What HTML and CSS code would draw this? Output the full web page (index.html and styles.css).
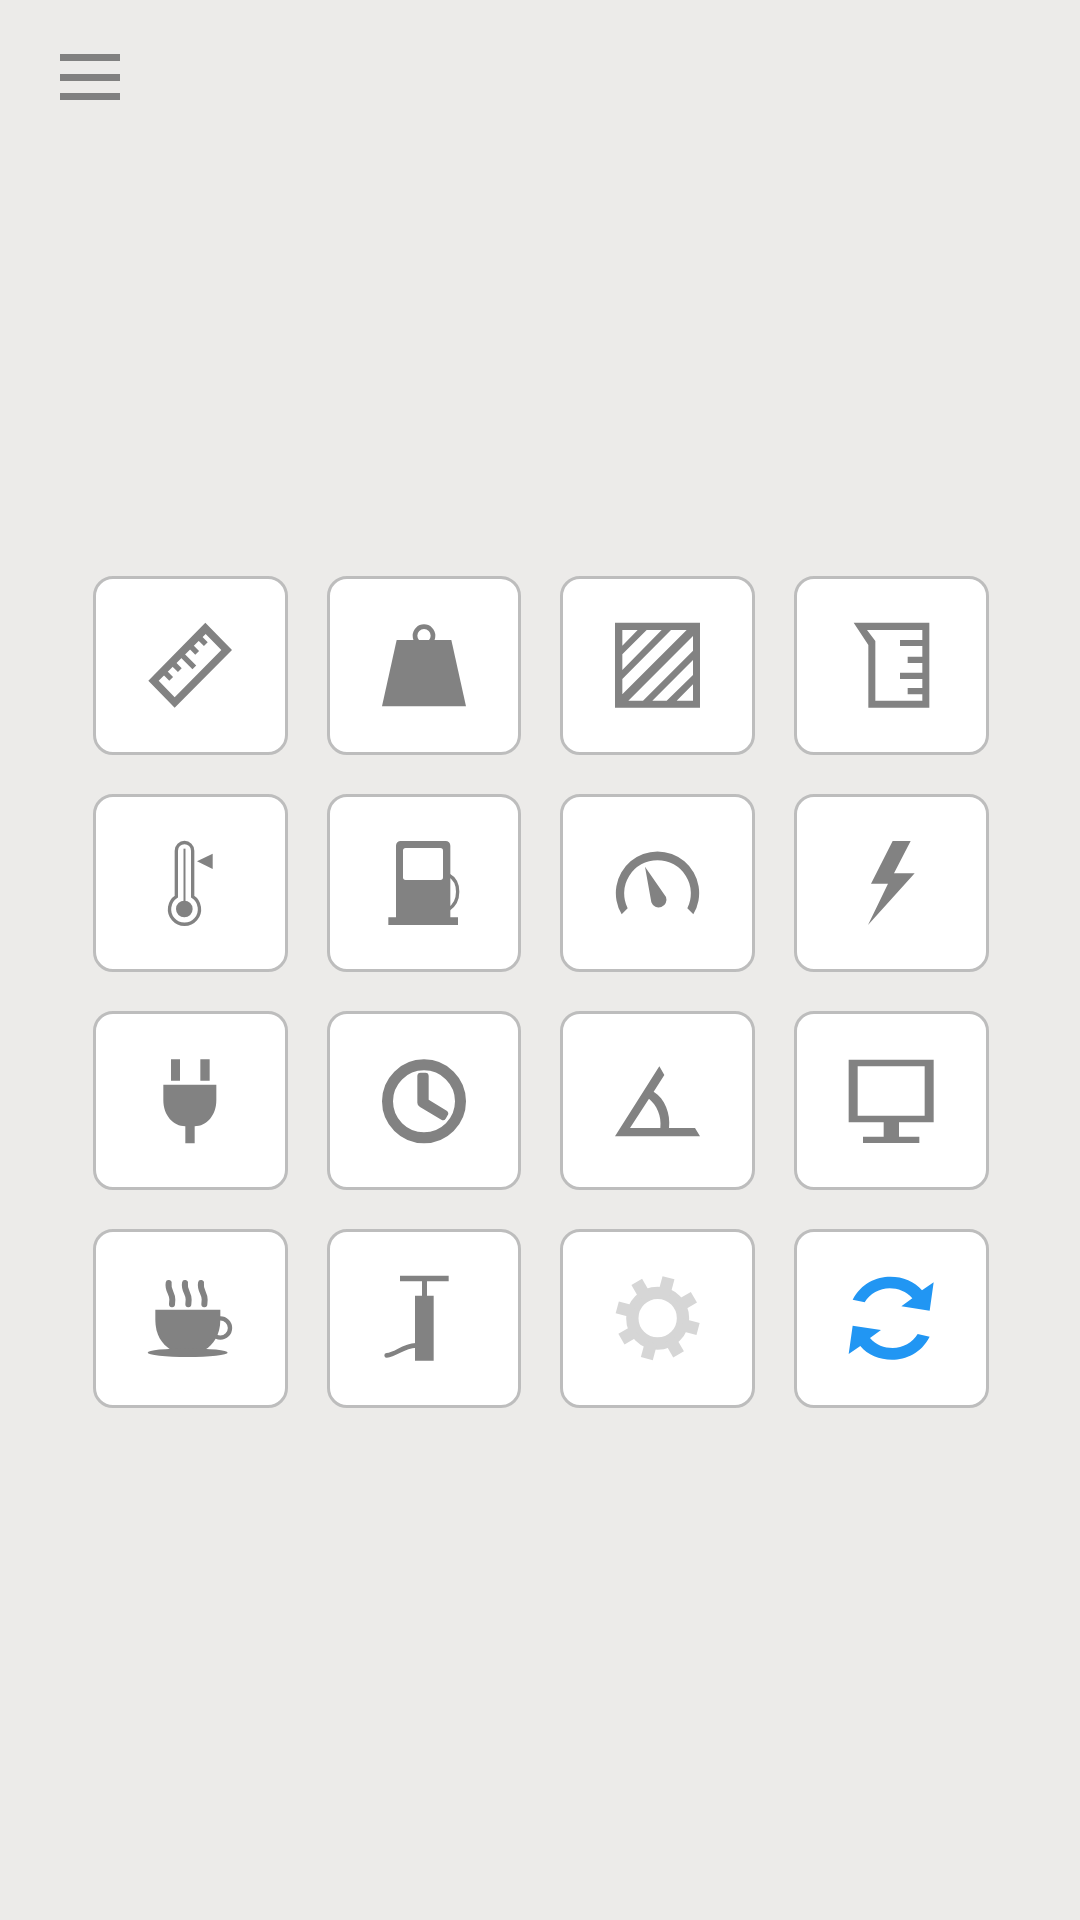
FILE: index.html
```html
<!DOCTYPE html>
<html lang="en">
<head>
<meta charset="utf-8">
<title>Tools</title>
<link rel="stylesheet" href="styles.css">
</head>
<body>
<header class="topbar">
  <button class="menu" aria-label="Menu"><span class="bar"></span><span class="bar"></span><span class="bar"></span></button>
</header>
<main class="grid">
  <button class="tile" aria-label="Length"><svg class="icon" viewBox="195 180 270 270">
    <path fill-rule="evenodd" d="M376,188 L456,270 L284,443 L205,362 Z M377,222 L236,362 L284,412 L424,270 Z"/>
    <path class="line" stroke-width="16" d="M357.500,232.500 L377.500,252.500 M331.500,258.500 L351.500,278.500 M305.500,284.500 L343,322 M279.500,310.500 L299.500,330.500 M253.500,336.500 L273.500,356.500"/>
  </svg></button>
  <button class="tile" aria-label="Weight"><svg class="icon" viewBox="897 180 270 270">
    <circle class="line" stroke-width="14" cx="1032" cy="227" r="27"/>
    <path d="M950,240 H1114 L1158,439 H906 Z"/>
  </svg></button>
  <button class="tile" aria-label="Area"><svg class="icon" viewBox="219 180 270 270">
    <path fill-rule="evenodd" d="M225,188 H480 V443 H225 Z M247,210 V257 L293,210 Z M320,210 L247,283 V330 L365,210 Z M393,210 L247,357 V403 L440,210 Z M459,228 L265,422 H309 L459,272 Z M459,300 L337,422 H380 L459,345 Z M459,373 L410,422 H459 Z"/>
  </svg></button>
  <button class="tile" aria-label="Volume"><svg class="icon" viewBox="919 180 270 270">
    <path fill-rule="evenodd" d="M942,188 H1169 V443 H986 V255 Z M982,210 L1007,243 V422 H1148 V403 H1104 V384 H1148 V357 H1081 V338 H1148 V309 H1104 V290 H1148 V258 H1081 V240 H1148 V210 Z"/>
  </svg></button>

  <button class="tile" aria-label="Temperature"><svg class="icon" viewBox="195 144 270 270">
    <path class="line" stroke-width="10" d="M289,320 V182 A24.500,24.500 0 0 1 338,182 V320 A45,45 0 1 1 289,320 Z"/>
    <path class="line" stroke-width="6" d="M313.500,176 V350"/>
    <circle cx="313" cy="357" r="25"/>
    <path d="M398,191 V237 L351,214 Z"/>
  </svg></button>
  <button class="tile" aria-label="Fuel"><svg class="icon" viewBox="897 144 270 270">
    <path class="line" stroke-width="10" d="M1106,255 Q1133,270 1133,305 Q1133,340 1106,358"/>
    <path fill-rule="evenodd" d="M962,153 H1097 A14,14 0 0 1 1111,167 V382 H1134 V405 H925 V382 H948 V167 A14,14 0 0 1 962,153 Z M977,174 A8,8 0 0 0 969,182 V262 A8,8 0 0 0 977,270 H1081 A8,8 0 0 0 1089,262 V182 A8,8 0 0 0 1081,174 Z"/>
  </svg></button>
  <button class="tile" aria-label="Speed"><svg class="icon" viewBox="219 144 270 270">
    <path d="M245,373 A125,125 0 1 1 460,373 L442,355 A100,100 0 1 0 263,355 Z"/>
    <path d="M315,230 L378,321 A23,23 0 1 1 334,337 Z"/>
  </svg></button>
  <button class="tile" aria-label="Power"><svg class="icon" viewBox="919 144 270 270">
    <path d="M1059,153 H1113 L1063,250 H1125 L985,405 L1045,281 H994 Z"/>
  </svg></button>

  <button class="tile" aria-label="Electricity"><svg class="icon" viewBox="195 167 270 270">
    <path d="M273,177 H300 V241 H273 Z M361,177 H389 V241 H361 Z"/>
    <path d="M250,253 H409 V300 C409,345 380,378 344,378 V429 H316 V378 C280,378 250,345 250,300 Z"/>
  </svg></button>
  <button class="tile" aria-label="Time"><svg class="icon" viewBox="897 167 270 270">
    <circle class="line" stroke-width="33" cx="1032" cy="303" r="109.500"/>
    <path d="M1012,227 Q1012,217 1022,217 H1036 Q1046,217 1046,227 V298 L1100,331 Q1108,337 1103,345 L1097,355 Q1092,363 1084,358 L1020,320 Q1012,316 1012,307 Z"/>
  </svg></button>
  <button class="tile" aria-label="Angle"><svg class="icon" viewBox="219 167 270 270">
    <path fill-rule="evenodd" d="M225,408 L358,198 L373,224 L341,274 C375,295 392,340 387,383 H465 L480,408 Z M270,383 H361 C365,345 350,315 327,295 Z"/>
  </svg></button>
  <button class="tile" aria-label="Screen"><svg class="icon" viewBox="919 167 270 270">
    <path fill-rule="evenodd" d="M927,178 H1182 V366 H1078 V409 H1139 V428 H970 V409 H1032 V366 H927 Z M954,198 V346 H1155 V198 Z"/>
  </svg></button>

  <button class="tile" aria-label="Energy"><svg class="icon" viewBox="195 160 270 270">
    <circle class="line" stroke-width="13" cx="421" cy="325" r="29"/>
    <path d="M226,270 H421 V300 C421,345 400,375 375,390 H272 C245,372 226,345 226,300 Z"/>
    <ellipse cx="323" cy="399" rx="120" ry="13"/>
    <path class="line round" stroke-width="18" d="M266,190 C262,212 278,222 277,240 L276,254 M315,190 C311,212 327,222 326,240 L325,254 M363,190 C359,212 375,222 374,240 L373,254"/>
  </svg></button>
  <button class="tile" aria-label="Pressure"><svg class="icon" viewBox="897 160 270 270">
    <path d="M960,168 H1106 V185 H1041 V228 H1061 V423 H1005 V228 H1026 V185 H960 Z"/>
    <path class="line round" stroke-width="14" d="M920,407 C950,405 965,380 1008,377"/>
  </svg></button>
  <button class="tile" aria-label="Settings"><svg class="icon gear" viewBox="219 160 270 270">
    <circle class="line" stroke-width="37" cx="353" cy="295.500" r="76"/>
    <g class="teeth">
      <rect x="334.500" y="170" width="37" height="50" transform="rotate(15 353 295.500)"/>
      <rect x="334.500" y="170" width="37" height="50" transform="rotate(60 353 295.500)"/>
      <rect x="334.500" y="170" width="37" height="50" transform="rotate(105 353 295.500)"/>
      <rect x="334.500" y="170" width="37" height="50" transform="rotate(150 353 295.500)"/>
      <rect x="334.500" y="170" width="37" height="50" transform="rotate(195 353 295.500)"/>
      <rect x="334.500" y="170" width="37" height="50" transform="rotate(240 353 295.500)"/>
      <rect x="334.500" y="170" width="37" height="50" transform="rotate(285 353 295.500)"/>
      <rect x="334.500" y="170" width="37" height="50" transform="rotate(330 353 295.500)"/>
    </g>
  </svg></button>
  <button class="tile" aria-label="Sync"><svg class="icon sync" viewBox="919 160 270 270">
    <path d="M939,240 C965,190 1010,171 1052,171 C1090,171 1125,185 1147,212 L1182,188 L1170,273 L1085,260 L1118,236 C1100,215 1075,206 1050,206 C1020,206 990,222 975,248 Z"/>
    <path transform="rotate(180 1054.500 295.500)" d="M939,240 C965,190 1010,171 1052,171 C1090,171 1125,185 1147,212 L1182,188 L1170,273 L1085,260 L1118,236 C1100,215 1075,206 1050,206 C1020,206 990,222 975,248 Z"/>
  </svg></button>
</main>
</body>
</html>
```

FILE: styles.css
```css
* { box-sizing: border-box; }

html, body {
  margin: 0;
  padding: 0;
}

body {
  width: 1080px;
  height: 1920px;
  overflow: hidden;
  background: #ecebe9;
  font-family: "Liberation Sans", Arial, sans-serif;
}

.topbar {
  padding: 54px 0 0 60px;
  height: 576px;
}

.menu {
  display: flex;
  flex-direction: column;
  gap: 12.5px;
  width: 60px;
  padding: 0;
  border: 0;
  background: none;
}

.bar {
  display: block;
  width: 60px;
  height: 7px;
  background: #808080;
}

.grid {
  display: grid;
  grid-template-columns: repeat(4, 194.7px);
  grid-auto-rows: 178.7px;
  gap: 39px;
  margin-left: 93px;
}

.tile {
  display: flex;
  align-items: center;
  justify-content: center;
  padding: 0;
  background: #fff;
  border: 3px solid #bdbdbd;
  border-radius: 20px;
}

.icon {
  display: block;
  width: 90px;
  height: 90px;
  flex: none;
  fill: #828282;
}

.line {
  fill: none;
  stroke: #828282;
}

.round {
  stroke-linecap: round;
  stroke-linejoin: round;
}

.gear .line { stroke: #d6d6d6; }
.gear .teeth { fill: #d6d6d6; }

.sync { fill: #2196f3; }
```
